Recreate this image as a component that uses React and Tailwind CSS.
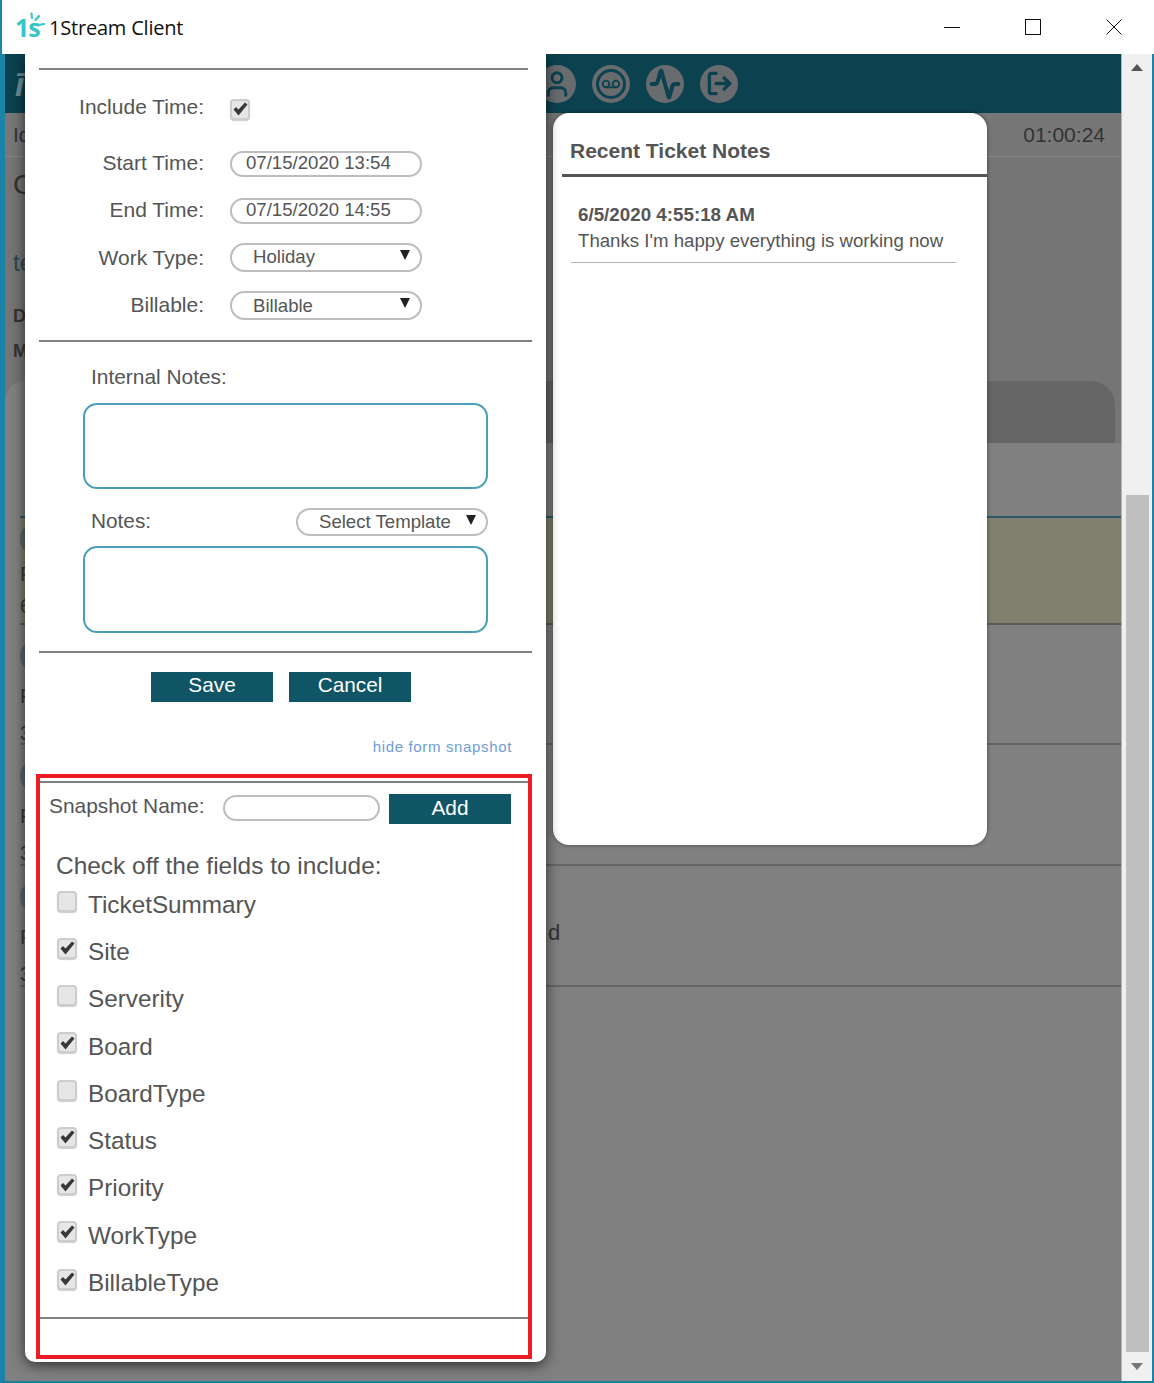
import React from "react";
import { User, Voicemail, Activity, LogOut } from "lucide-react";

const sans = "font-['Liberation_Sans',Arial,sans-serif]";

function Check({ checked, className = "" }) {
  return (
    <span className={"flex items-center justify-center w-[20px] h-[21px] rounded-[4px] border-2 border-[#cdcdcd] bg-[#e6e6e6] shadow-[0_1px_1px_rgba(0,0,0,0.2)] " + className}>
      {checked && (
        <svg width="15" height="14" viewBox="0 0 15 14">
          <path d="M0.5 7.5 L3 5 L5.5 7.5 L12 0.5 L14.5 2.5 L5.5 13.5 Z" fill="#383838" />
        </svg>
      )}
    </span>
  );
}

function Pill({ children, arrow, className = "" }) {
  return (
    <div className={"relative flex items-center rounded-full border-2 border-[#bdbdbd] bg-white text-[#555] " + className}>
      {children}
      {arrow && <span className="absolute right-[10px] top-[5px] w-0 h-0 border-l-[5px] border-r-[5px] border-t-[10px] border-l-transparent border-r-transparent border-t-[#222]" />}
    </div>
  );
}

function Row({ label, h = "h-[47px]", labelClass = "", children }) {
  return (
    <div className={"flex items-center " + h}>
      <span className={"w-[179px] text-right text-[21px] leading-none text-[#555] whitespace-nowrap " + labelClass}>{label}</span>
      <div className="ml-[26px] w-[192px]">{children}</div>
    </div>
  );
}

const Rule = ({ className }) => <div className={"h-[2px] bg-[#808080] " + className} />;

const fields = [
  ["TicketSummary", false], ["Site", true], ["Serverity", false], ["Board", true], ["BoardType", false],
  ["Status", true], ["Priority", true], ["WorkType", true], ["BillableType", true],
];

function TicketRow({ h, tail }) {
  return (
    <div className={"relative overflow-hidden shrink-0 bg-[#808080] border-b-2 border-[#666] " + h}>
      <div className="flex flex-col pt-[18px] text-[#3b3340] text-[20px] leading-none gap-[17px]">
        <span className="w-[22px] h-[26px] rounded-full bg-[#5b6b70]" />
        <span>F</span>
        <span>3</span>
      </div>
      {tail && <span className="absolute left-[528px] top-[56px] text-[22px] leading-none text-[#333]">{tail}</span>}
    </div>
  );
}

export default function App() {
  return (
    <div className={"w-[1154px] h-[1383px] flex flex-col bg-white overflow-hidden border-l-2 border-[#1b82a8] " + sans}>
      <div className="h-[54px] flex items-center shrink-0 bg-white">
        <div className="relative ml-[13px] w-[30px] h-[30px]">
          <span className="absolute left-0 top-[3px] text-[25px] leading-none font-bold tracking-[-1px] text-[#35c6c6] font-['Open_Sans',sans-serif]">1s</span>
          <svg className="absolute left-[11px] top-0" width="20" height="20" viewBox="0 0 20 20">
            <path d="M5.5 1.5 L6 6 M13 4 L9.5 8 M12.5 13 L18 12" stroke="#35c6c6" strokeWidth="2.2" strokeLinecap="round" fill="none" />
          </svg>
        </div>
        <span className="ml-[4px] mt-[2px] text-[20px] leading-none text-[#111] font-['Open_Sans',sans-serif] tracking-[-0.2px]">1Stream Client</span>
        <div className="ml-auto flex items-center">
          <svg width="16" height="16" viewBox="0 0 16 16" className="mr-[65px]"><path d="M0 8.5H16" stroke="#111" /></svg>
          <svg width="16" height="16" viewBox="0 0 16 16" className="mr-[65px]"><rect x="0.5" y="0.5" width="15" height="15" fill="none" stroke="#111" /></svg>
          <svg width="16" height="16" viewBox="0 0 16 16" className="mr-[32px]"><path d="M0.5 0.5L15.5 15.5M15.5 0.5L0.5 15.5" stroke="#111" /></svg>
        </div>
      </div>

      <div className="relative flex-1 flex border-b-2 border-[#1b7f9c] min-h-0 overflow-hidden">
        <div className="w-[3px] bg-[#1b82a8] shrink-0" />
        <div className="w-[1117px] shrink-0 flex flex-col bg-[#808080] border-r border-[#b5b5b5]">
          <div className="h-[59px] shrink-0 bg-[#0c414f] flex items-center">
            <span className="ml-[10px] text-[34px] italic font-bold text-[#6f8f98] leading-none">ī</span>
            <div className="ml-[514px] flex gap-[16px]">
              <span className="w-[38px] h-[38px] rounded-full bg-[#686c6f] flex items-center justify-center text-[#0c414f]">
                <User size={30} strokeWidth={2.4} />
              </span>
              <span className="w-[38px] h-[38px] rounded-full bg-[#686c6f] flex items-center justify-center text-[#0c414f]">
                <span className="w-[30px] h-[30px] rounded-full border-[3px] border-[#0c414f] flex items-center justify-center">
                  <Voicemail size={20} strokeWidth={2.2} />
                </span>
              </span>
              <span className="w-[38px] h-[38px] rounded-full bg-[#686c6f] flex items-center justify-center text-[#0c414f]">
                <Activity size={32} strokeWidth={3} />
              </span>
              <span className="w-[38px] h-[38px] rounded-full bg-[#686c6f] flex items-center justify-center text-[#0c414f]">
                <LogOut size={27} strokeWidth={3} />
              </span>
            </div>
          </div>
          <div className="h-[44px] shrink-0 bg-[#767776] border-b border-[#858685] flex items-center justify-between text-[21px] text-[#333] pl-[8px] pr-[16px] leading-none">
            <span>Id</span>
            <span>01:00:24</span>
          </div>
          <div className="h-[224px] shrink-0 bg-[#747574] flex flex-col text-[#333] pl-[8px] leading-none">
            <span className="mt-[14px] text-[28px]">C</span>
            <span className="mt-[52px] text-[24px] text-[#2a4653]">te</span>
            <span className="mt-[32px] text-[18px] font-bold">D</span>
            <span className="mt-[17px] text-[18px] font-bold">M</span>
          </div>
          <div className="h-[62px] shrink-0 bg-[#747574] pr-[6px] flex">
            <div className="w-[20px] h-full bg-[#808080] rounded-tl-[24px]" />
            <div className="flex-1 h-full bg-[#656665] rounded-tr-[24px]" />
          </div>
          <div className="h-[73px] shrink-0 bg-[#808080]" />
          <div className="ml-[15px] flex flex-col flex-1 min-h-0">
            <div className="h-[2px] shrink-0 bg-[#2b5b6b]" />
            <div className="h-[107px] shrink-0 bg-[#7f806d] border-b-2 border-[#5c5c56] flex flex-col pt-[8px] gap-[12px] text-[20px] leading-none text-[#3b3340]">
              <span className="w-[22px] h-[26px] rounded-full bg-[#5b6b62]" />
              <span>F</span>
              <span>6</span>
            </div>
            <TicketRow h="h-[120px]" />
            <TicketRow h="h-[121px]" />
            <TicketRow h="h-[121px]" tail="d" />
            <div className="flex-1 bg-[#808080] -ml-[15px]" />
          </div>
        </div>

        <div className="flex-1 flex flex-col items-center bg-[#f0f0f0] pt-[10px] pb-[10px]">
          <span className="w-0 h-0 border-l-[6px] border-r-[6px] border-b-[7px] border-l-transparent border-r-transparent border-b-[#555]" />
          <div className="mt-[424px] w-[23px] h-[857px] bg-[#c0c0c0]" />
          <span className="mt-[11px] w-0 h-0 border-l-[6px] border-r-[6px] border-t-[7px] border-l-transparent border-r-transparent border-t-[#777]" />
        </div>
        <div className="w-[2px] bg-[#1b82a8] shrink-0" />

        {/* Right modal */}
        <div className="absolute left-[551px] top-[59px] w-[434px] h-[732px] bg-white rounded-[16px] shadow-[0_0_4px_rgba(0,0,0,0.45)] pt-[27px]">
          <div className="ml-[17px] text-[21px] leading-none font-bold text-[#555] whitespace-nowrap">Recent Ticket Notes</div>
          <div className="mt-[13px] ml-[9px] h-[3px] bg-[#555]" />
          <div className="ml-[25px] mt-[29px] text-[18.8px] leading-none font-bold text-[#555] whitespace-nowrap">6/5/2020 4:55:18 AM</div>
          <div className="ml-[25px] mt-[7px] text-[18.65px] leading-none text-[#555] whitespace-nowrap">Thanks I'm happy everything is working now</div>
          <div className="mt-[12px] ml-[18px] w-[385px] h-[1px] bg-[#b5b5b5]" />
        </div>

        {/* Left modal */}
        <div className="absolute left-[23px] top-0 w-[521px] h-[1308px] bg-white rounded-b-[10px] shadow-[0_3px_14px_rgba(0,0,0,0.65)] flex flex-col">
          <Rule className="mt-[14px] ml-[14px] w-[489px]" />
          <Row label="Include Time:" h="h-[70px] pt-[8px]" labelClass="-mt-[5px]"><Check checked /></Row>
          <Row label="Start Time:" labelClass="-mt-[2px]"><Pill className="h-[26px] pl-[14px] text-[18.6px] leading-none">07/15/2020 13:54</Pill></Row>
          <Row label="End Time:" labelClass="-mt-[2px]"><Pill className="h-[26px] pl-[14px] text-[18.6px] leading-none">07/15/2020 14:55</Pill></Row>
          <Row label="Work Type:"><Pill arrow className="h-[29px] pl-[21px] text-[18.6px] leading-none">Holiday</Pill></Row>
          <Row label="Billable:" labelClass="-mt-[1px]"><Pill arrow className="mt-[1px] h-[29px] pl-[21px] pt-[2px] text-[18.6px] leading-none">Billable</Pill></Row>
          <Rule className="mt-[12px] ml-[14px] w-[493px]" />
          <div className="mt-[23px] ml-[66px] h-[24px] flex items-center text-[20.9px] leading-none text-[#555]">Internal Notes:</div>
          <div className="mt-[14px] ml-[58px] w-[405px] h-[86px] rounded-[14px] border-2 border-[#4a9fb8]" />
          <div className="mt-[19px] ml-[66px] w-[397px] h-[28px] flex items-center justify-between text-[#555]">
            <span className="text-[20.8px] leading-none -mt-[1px]">Notes:</span>
            <Pill arrow className="w-[192px] h-[28px] pl-[21px] text-[18.6px] leading-none">Select Template</Pill>
          </div>
          <div className="mt-[10px] ml-[58px] w-[405px] h-[87px] rounded-[14px] border-2 border-[#4a9fb8]" />
          <Rule className="mt-[18px] ml-[14px] w-[493px]" />
          <div className="mt-[19px] ml-[126px] flex gap-[16px]">
            <button className="w-[122px] h-[30px] bg-[#0f5565] text-white text-[20.8px] leading-none pb-[3px]">Save</button>
            <button className="w-[122px] h-[30px] bg-[#0f5565] text-white text-[20.8px] leading-none pb-[3px]">Cancel</button>
          </div>
          <div className="mt-[36px] mr-[34px] h-[18px] text-right text-[15px] leading-[18px] tracking-[0.65px] text-[#6f9bd6]">hide form snapshot</div>

          <div className="mt-[18px] ml-[11px] w-[496px] h-[585px] border-4 border-[#ed1c24] flex flex-col">
            <Rule className="mt-[3px]" />
            <div className="mt-[11px] flex items-center h-[30px]">
              <span className="ml-[9px] -mt-[6px] text-[20.9px] leading-none text-[#555] w-[155px] whitespace-nowrap">Snapshot Name:</span>
              <div className="ml-[19px] -mt-[3px] w-[157px] h-[26px] rounded-full border-2 border-[#bdbdbd]" />
              <button className="ml-[9px] w-[122px] h-[30px] pb-[2px] bg-[#0f5565] text-white text-[20.8px] leading-none">Add</button>
            </div>
            <div className="mt-[27px] ml-[16px] h-[30px] flex items-center text-[24.45px] leading-none text-[#555] whitespace-nowrap">Check off the fields to include:</div>
            <div className="flex flex-col">
              {fields.map(([name, on]) => (
                <div key={name} className="h-[47.25px] flex items-center ml-[17px]">
                  <Check checked={on} className="-mt-[7px]" />
                  <span className="ml-[11px] mt-[1px] text-[24.3px] leading-none text-[#555]">{name}</span>
                </div>
              ))}
            </div>
            <Rule className="mt-[11px]" />
          </div>
        </div>
      </div>
    </div>
  );
}
